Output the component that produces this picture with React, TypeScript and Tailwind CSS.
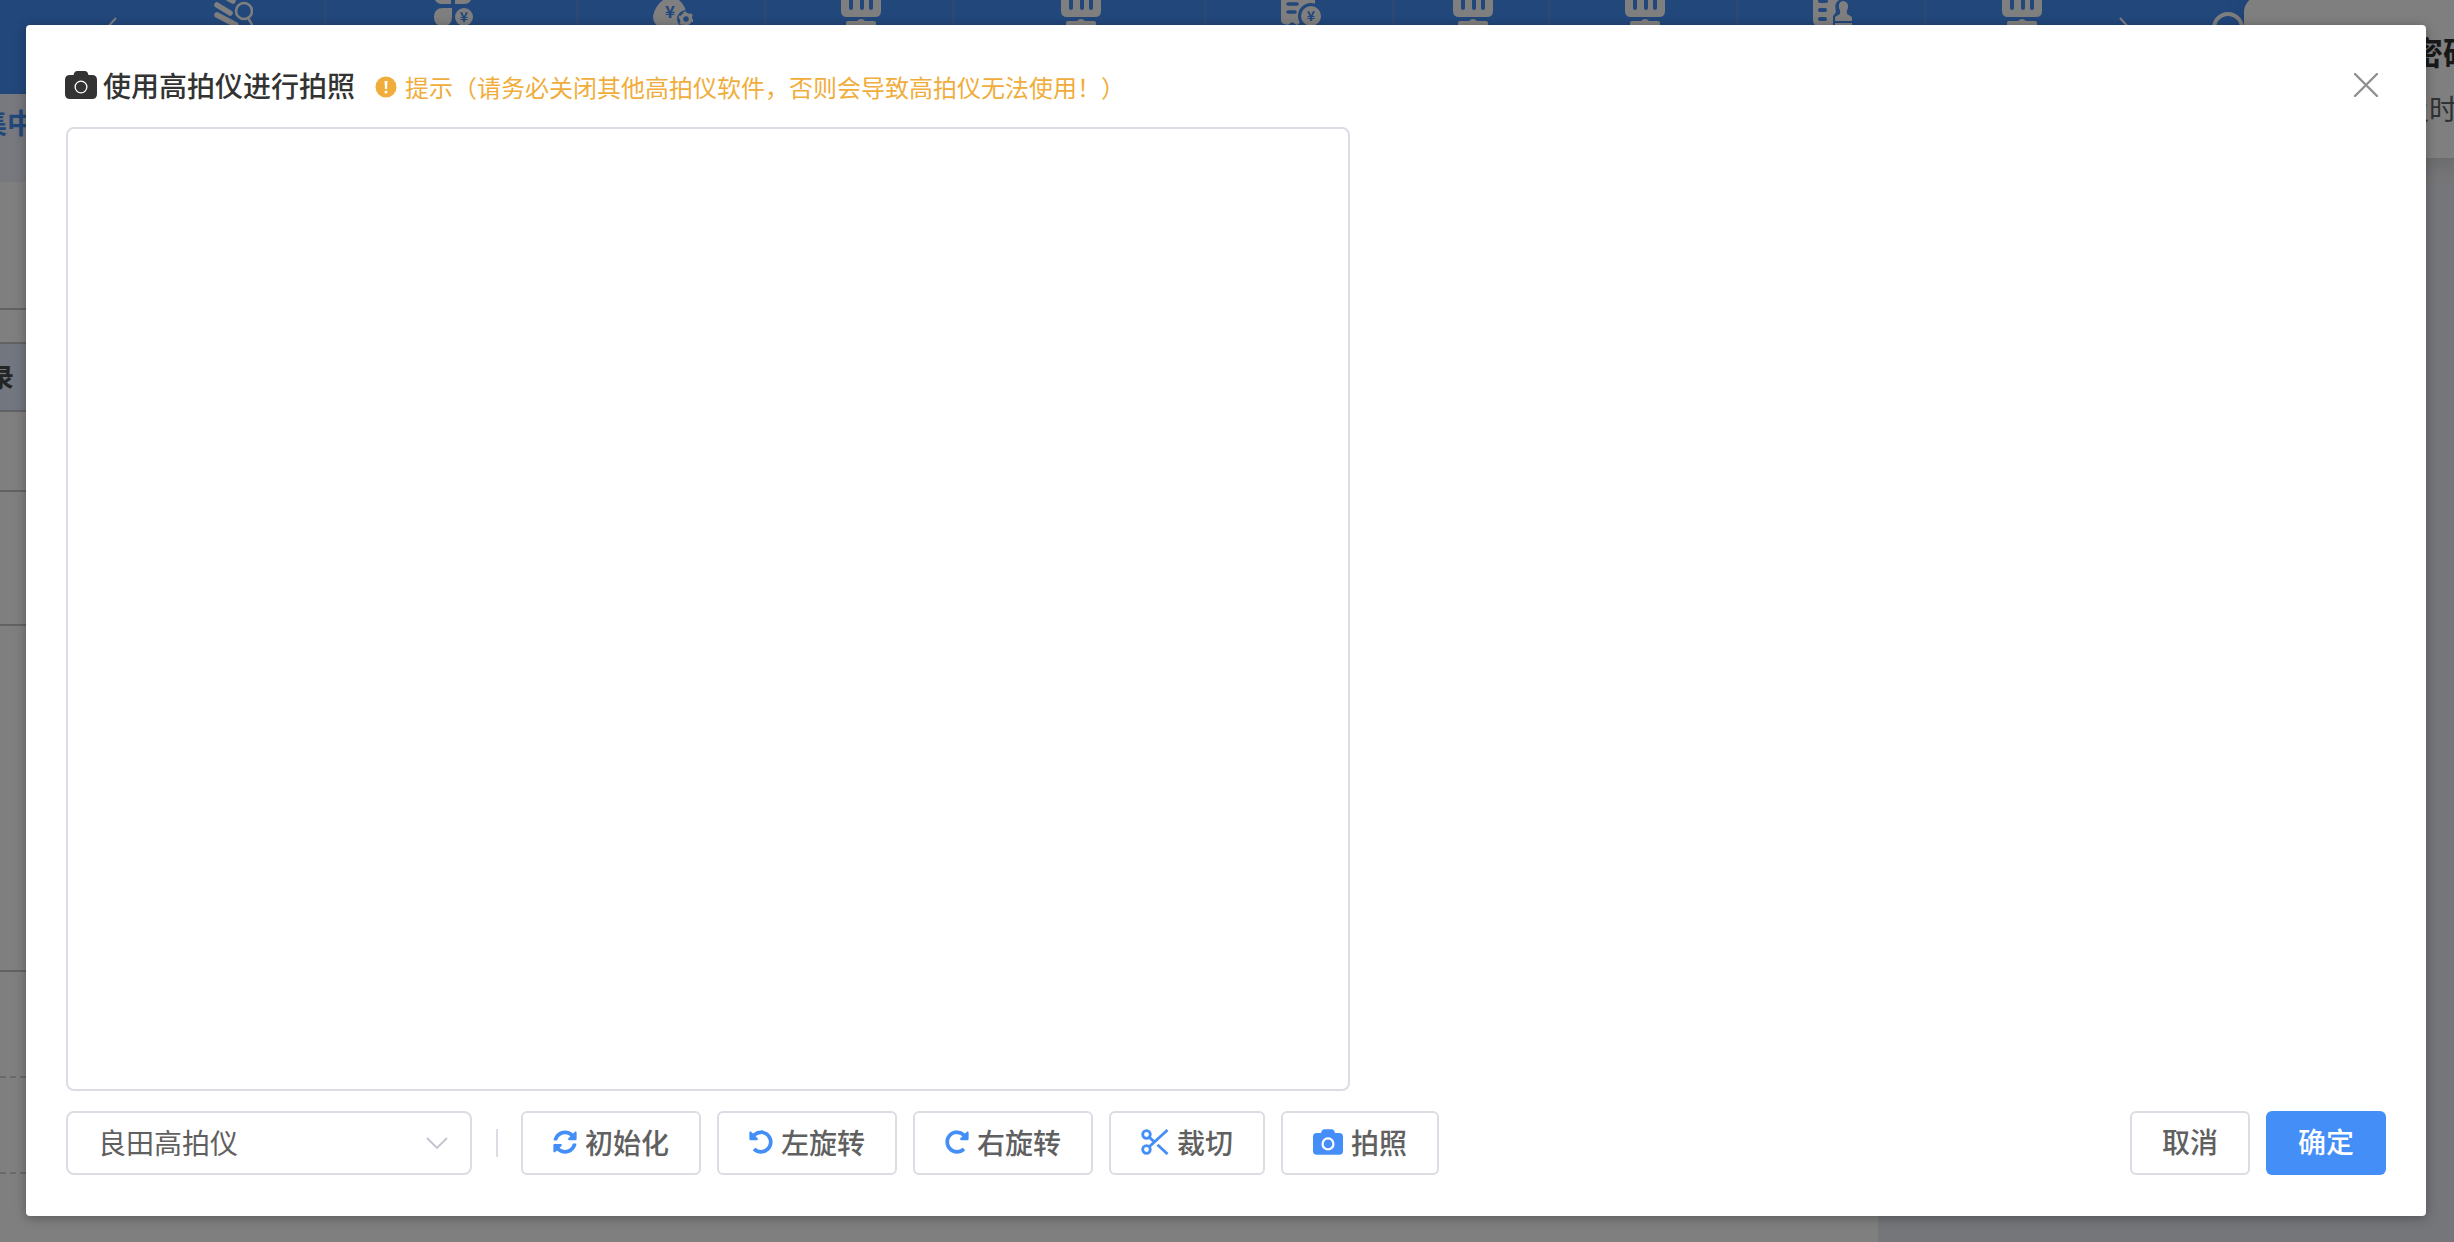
import React from 'react';
import { FaSyncAlt, FaUndoAlt, FaRedoAlt } from 'react-icons/fa';

function CameraIcon({ className }: { className: string }) {
  return (
    <svg viewBox="0 0 32 28" className={className} aria-hidden="true">
      <path
        fillRule="evenodd"
        fill="currentColor"
        d="M5 4h3.500l.8-2.200Q10 0 12 0h8q2 0 2.700 1.800L23.500 4H27q5 0 5 5v14q0 5-5 5H5q-5 0-5-5V9q0-5 5-5zM16 9.500a6.500 6.500 0 1 0 0 13a6.500 6.500 0 0 0 0-13zm0 1.300a5.200 5.200 0 1 1 0 10.400a5.200 5.200 0 0 1 0-10.400z"
      />
    </svg>
  );
}

function CameraBoldIcon({ className }: { className: string }) {
  return (
    <svg viewBox="0 0 32 27" className={className} aria-hidden="true">
      <path
        fill="currentColor"
        d="M4 4h4.500l.8-2.200Q10 0 12 0h8q2 0 2.700 1.800L23.500 4H28q4 0 4 4v15q0 4-4 4H4q-4 0-4-4V8q0-4 4-4z"
      />
      <circle cx="16" cy="15.500" r="5.800" fill="none" stroke="#fff" strokeWidth="2.400" />
    </svg>
  );
}

function ScissorsIcon({ className }: { className: string }) {
  return (
    <svg viewBox="0 0 28 26" className={className} fill="none" stroke="currentColor" aria-hidden="true">
      <circle cx="5.500" cy="5.500" r="3.800" strokeWidth="2.800" />
      <circle cx="5.500" cy="20.500" r="3.800" strokeWidth="2.800" />
      <path d="M8.500 17.500L26.500 1M8.500 8.500L13 12.600M16.500 15.800L26.500 25" strokeWidth="2.800" />
    </svg>
  );
}

function Yen({ x, y, size }: { x: number; y: number; size: number }) {
  return (
    <text x={x} y={y} fontSize={size} fontWeight="700" textAnchor="middle" fill="#448ef7">
      ¥
    </text>
  );
}

function NavIcon({ name }: { name: string }) {
  return (
    <svg viewBox="0 0 40 26" className="h-[26px] w-10" fill="#fff" aria-hidden="true">
      {name === 'search' && (
        <g fill="none" stroke="#fff" strokeLinecap="round">
          <path d="M4 5l13 8M4 15l19 10M11-4l9 5" strokeWidth="5.500" />
          <circle cx="31" cy="11" r="11" fill="#448ef7" stroke="none" />
          <circle cx="31" cy="11" r="8" strokeWidth="2.500" />
          <path d="M35 18l5 8" strokeWidth="2.500" />
        </g>
      )}
      {name === 'petals' && (
        <g>
          <path d="M2 0h16v4H9Q4 4 2 0zM22 0h16q-2 4-7 4h-9zM1 17q0-9 9-9h9v9q0 9-9 9t-9-9z" />
          <circle cx="31" cy="17" r="9" />
          <Yen x={31} y={22} size={14} />
        </g>
      )}
      {name === 'bag' && (
        <g>
          <path d="M10 0h16q7 6 8 16v10H6Q0 24 0 16Q2 6 10 0z" />
          <Yen x={17} y={18} size={17} />
          <circle cx="33" cy="19" r="9" fill="#448ef7" />
          <circle cx="33" cy="19" r="4.500" fill="none" stroke="#fff" strokeWidth="3.500" />
          <circle cx="33" cy="19" r="6.500" fill="none" stroke="#fff" strokeWidth="2" strokeDasharray="3 3.800" />
        </g>
      )}
      {name === 'chart' && (
        <g>
          <path d="M0 0h40v11q0 6-6 6H6q-6 0-6-6zM5 26v-3q0-2 2-2h9q4-4 8 0h9q2 0 2 2v3z" />
          <path d="M10 0v8M21 0v8M30 0v8" stroke="#448ef7" strokeWidth="4" strokeLinecap="round" />
        </g>
      )}
      {name === 'invoice' && (
        <g>
          <path d="M0 0h34v24l-4-2-5 3-5-3-4 3-5-3-4 3-4-1q-3-1-3-4z" />
          <path d="M7 4h9M7 12h7" stroke="#448ef7" strokeWidth="3.500" strokeLinecap="round" />
          <circle cx="30" cy="16" r="13" fill="#448ef7" />
          <circle cx="30" cy="16" r="10" />
          <Yen x={30} y={21} size={14} />
        </g>
      )}
      {name === 'stamp' && (
        <g>
          <path d="M0 0h34v26H6q-6 0-6-6z" />
          <path d="M7 1h6M7 10h5M7 19h5" stroke="#448ef7" strokeWidth="4" strokeLinecap="round" />
          <path d="M20 26V16l3-4q-3-12 7-13q11 1 8 13l3 4v10z" fill="#448ef7" />
          <path d="M27 14q1-3-1-6q-1-6 4-7q6 1 5 7q-2 3-1 6l5 3v4H22v-4zM22 23h17v3H22z" />
        </g>
      )}
    </svg>
  );
}

const navItems = [
  { icon: 'search', width: 'w-[188px]' },
  { icon: 'petals', width: 'w-[252px]' },
  { icon: 'bag', width: 'w-[188px]' },
  { icon: 'chart', width: 'w-[188px]' },
  { icon: 'chart', width: 'w-[252px]' },
  { icon: 'invoice', width: 'w-[188px]' },
  { icon: 'chart', width: 'w-[156px]' },
  { icon: 'chart', width: 'w-[188px]' },
  { icon: 'stamp', width: 'w-[188px]' },
  { icon: 'chart', width: 'w-[188px]' },
];

const tools = [
  { label: '初始化', icon: <FaSyncAlt className="size-6 text-[#448ef7]" /> },
  { label: '左旋转', icon: <FaUndoAlt className="size-6 text-[#448ef7]" /> },
  { label: '右旋转', icon: <FaRedoAlt className="size-6 text-[#448ef7]" /> },
  { label: '裁切', icon: <ScissorsIcon className="h-[26px] w-7 text-[#448ef7]" /> },
  { label: '拍照', icon: <CameraBoldIcon className="h-[26px] w-[30px] text-[#448ef7]" /> },
];

function Backdrop() {
  return (
    <div className="absolute inset-0 flex flex-col overflow-hidden bg-white" aria-hidden="true">
      {/* Top navigation */}
      <div className="flex h-[94px] shrink-0 items-start bg-[#448ef7]">
        <svg viewBox="0 0 138 40" className="h-10 w-[138px] shrink-0" fill="none" stroke="#fff" strokeWidth="2">
          <path d="M116 18l-10 11l10 11" />
        </svg>
        {navItems.map((item, index) => (
          <div
            key={index}
            className={`flex h-full shrink-0 justify-center border-r-2 border-[#5892e8] pl-1 last-of-type:border-r-0 ${item.width}`}
          >
            <NavIcon name={item.icon} />
          </div>
        ))}
        <svg viewBox="0 0 140 40" className="h-10 w-[140px] shrink-0" fill="none" stroke="#fff">
          <path d="M6 18l10 11l-10 11" strokeWidth="2" />
          <circle cx="114" cy="28" r="14" strokeWidth="4" />
        </svg>
      </div>

      {/* Page body */}
      <div className="flex flex-1">
        <div className="w-[1878px] shrink-0">
          <div className="h-[88px] bg-[#f0f3fc] pt-2 text-[28px] leading-10 font-bold text-[#448ef7]">
            <span className="-ml-[21px]">集中</span>
          </div>
          <div className="h-[128px] border-b-2 border-[#c4c5cb]" />
          <div className="h-[34px] border-b-2 border-[#c4c5cb]" />
          <div className="h-[68px] border-b-2 border-[#c4c5cb] bg-[#e4eeff] text-[26px] leading-[64px] font-bold text-[#4a4a4c]">
            <span className="-ml-3">录</span>
          </div>
          <div className="h-20 border-b-2 border-[#c4c5cb]" />
          <div className="h-[134px] border-b-2 border-[#c4c5cb]" />
          <div className="h-[346px] border-b-2 border-[#c4c5cb]" />
          <div className="h-[106px] border-b-2 border-dashed border-[#d2d2d8]" />
          <div className="h-24 border-b-2 border-dashed border-[#d2d2d8]" />
        </div>
        <div className="flex-1 bg-[#ebecf2]" />
      </div>

      {/* Notification */}
      <div className="absolute -top-1 -right-10 h-[162px] w-[250px] rounded-2xl bg-white pt-[34px] pl-[167px] whitespace-nowrap shadow-[0_4px_24px_rgba(0,0,0,0.12)]">
        <p className="text-[32px] leading-[42px] font-bold text-[#303133]">密码</p>
        <p className="-ml-[10px] pt-4 text-[28px] leading-10 text-[#606266]">及时</p>
      </div>
    </div>
  );
}

export default function App() {
  return (
    <div className="relative flex min-h-screen font-['Noto_Sans_CJK_SC','Liberation_Sans',sans-serif]">
      <Backdrop />
      <div className="relative flex flex-1 bg-black/50 pt-[25px] pr-7 pb-[26px] pl-[26px]">
        <div
          role="dialog"
          aria-modal="true"
          aria-labelledby="dialog-title"
          className="flex flex-1 flex-col rounded bg-white px-10 pb-[41px] shadow-[0_2px_12px_rgba(0,0,0,0.3)]"
        >
          {/* Header */}
          <header className="flex h-[102px] items-center pt-[18px]">
            <CameraIcon className="-ml-px h-7 w-8 text-[#333]" />
            <h2 id="dialog-title" className="ml-1.5 text-[28px] leading-10 font-medium text-[#333]">
              使用高拍仪进行拍照
            </h2>
            <div className="ml-5 flex items-center gap-2 pt-1 text-2xl text-[#f0ad3c]">
              <svg viewBox="0 0 22 22" className="size-[22px]" aria-hidden="true">
                <circle cx="11" cy="11" r="10.500" fill="currentColor" />
                <path d="M9.500 5h3l-.5 8h-2z" fill="#fff" />
                <circle cx="11" cy="16" r="1.500" fill="#fff" />
              </svg>
              <p>提示（请务必关闭其他高拍仪软件，否则会导致高拍仪无法使用！）</p>
            </div>
            <button type="button" aria-label="关闭" className="mr-2 ml-auto text-[#909090]">
              <svg viewBox="0 0 24 24" className="size-6" fill="none" stroke="currentColor" strokeWidth="2.400">
                <path d="M1 1l22 22M23 1L1 23" strokeLinecap="round" />
              </svg>
            </button>
          </header>

          {/* Camera preview */}
          <div className="w-[1284px] max-w-full flex-1 rounded-lg border-2 border-[#dcdde4]" />

          {/* Footer */}
          <footer className="flex items-center pt-5 text-[28px] text-[#606060]">
            <div className="relative">
              <label htmlFor="device" className="sr-only">
                高拍仪
              </label>
              <select
                id="device"
                className="h-16 w-[406px] appearance-none rounded-lg border-2 border-[#dcdde4] bg-white pr-16 pb-0.5 pl-[30px]"
              >
                <option>良田高拍仪</option>
              </select>
              <svg
                viewBox="0 0 22 12"
                className="pointer-events-none absolute top-[26px] right-6 h-3 w-[22px]"
                fill="none"
                stroke="#c0c4cc"
                strokeWidth="1.800"
                aria-hidden="true"
              >
                <path d="M1 1l10 10L21 1" />
              </svg>
            </div>
            <div className="mr-[23px] ml-6 h-7 w-0.5 bg-[#dcdde4]" />
            <div className="flex gap-4">
              {tools.map((tool) => (
                <button
                  key={tool.label}
                  type="button"
                  className="flex h-16 items-center gap-2 rounded-md border-2 border-[#dcdde4] px-[30px] pb-0.5 font-medium"
                >
                  {tool.icon}
                  {tool.label}
                </button>
              ))}
            </div>
            <div className="ml-auto flex gap-4">
              <button type="button" className="h-16 w-[120px] rounded-md border-2 border-[#dcdde4] pb-1 font-medium">
                取消
              </button>
              <button type="button" className="h-16 w-[120px] rounded-md bg-[#448ef7] pb-1 font-medium text-white">
                确定
              </button>
            </div>
          </footer>
        </div>
      </div>
    </div>
  );
}
